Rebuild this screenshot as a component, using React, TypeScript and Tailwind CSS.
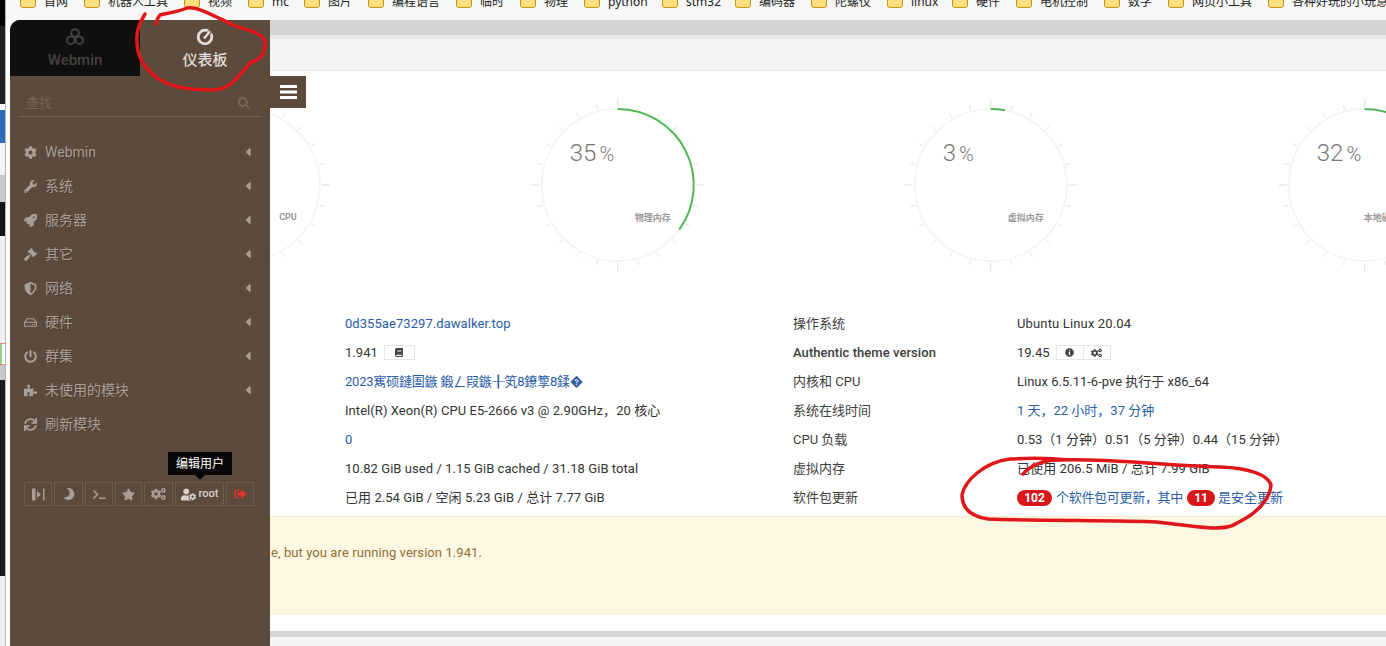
import React from "react";
import { FaCog, FaWrench, FaRocket, FaGavel, FaShieldAlt, FaRegHdd, FaPowerOff, FaPuzzlePiece, FaSync, FaCaretLeft, FaSearch, FaStar, FaCogs, FaMoon, FaTerminal, FaSignOutAlt, FaUserCog, FaBook, FaInfoCircle } from "react-icons/fa";

const bookmarks: [string, string][] = [
  ["首网", "w-[24px]"],
  ["机器人工具", "w-[60px]"],
  ["视频", "w-[24px]"],
  ["mc", "w-[16px]"],
  ["图片", "w-[24px]"],
  ["编程语言", "w-[48px]"],
  ["临时", "w-[24px]"],
  ["物理", "w-[24px]"],
  ["python", "w-[38px]"],
  ["stm32", "w-[33px]"],
  ["编码器", "w-[36px]"],
  ["陀螺仪", "w-[36px]"],
  ["linux", "w-[25px]"],
  ["硬件", "w-[24px]"],
  ["电机控制", "w-[48px]"],
  ["数学", "w-[24px]"],
  ["网页小工具", "w-[60px]"],
  ["各种好玩的小玩意", "w-[96px]"],
];

const menu: [React.ComponentType<{ className?: string }>, string, boolean][] = [
  [FaCog, "Webmin", true],
  [FaWrench, "系统", true],
  [FaRocket, "服务器", true],
  [FaGavel, "其它", true],
  [FaShieldAlt, "网络", true],
  [FaRegHdd, "硬件", true],
  [FaPowerOff, "群集", true],
  [FaPuzzlePiece, "未使用的模块", true],
  [FaSync, "刷新模块", false],
];

function Gauge({ pct, label }: { pct: number; label: string }) {
  const cx = 186.75, cy = 114, r = 76;
  const a = (pct / 100) * 2 * Math.PI;
  const ex = cx + r * Math.sin(a), ey = cy - r * Math.cos(a);
  const ticks = Array.from({ length: 24 }, (_, i) => i * 15);
  return (
    <svg width="373.5" height="238" className="shrink-0">
      <circle cx={cx} cy={cy} r={r} fill="none" stroke="#f5f5f5" strokeWidth="2" />
      {ticks.map((d) => {
        const t = (d * Math.PI) / 180;
        const major = d % 90 === 0;
        const r1 = 78, r2 = major ? 86 : 83;
        return (
          <line key={d} x1={cx + r1 * Math.sin(t)} y1={cy - r1 * Math.cos(t)} x2={cx + r2 * Math.sin(t)} y2={cy - r2 * Math.cos(t)} stroke={major ? "#dddddd" : "#e4e4e4"} strokeWidth="1" />
        );
      })}
      {pct > 0 && (
        <path d={`M${cx} ${cy - r}A${r} ${r} 0 ${pct > 50 ? 1 : 0} 1 ${ex} ${ey}`} fill="none" stroke="#52b856" strokeWidth="2" />
      )}
      {pct > 0 && (
        <text x={cx - 48} y={cy - 24} fill="#777777" fontSize="24" fontWeight="300">
          {pct}
          <tspan fontSize="20" dx="3">%</tspan>
        </text>
      )}
      <text x={cx + 53} y={pct > 0 ? cy + 36 : cy + 35} fill="#9a9a9a" fontSize="9" fontWeight="700" textAnchor="end">{label}</text>
    </svg>
  );
}

function Row({ a, b, c }: { a: React.ReactNode; b: React.ReactNode; c: React.ReactNode }) {
  return (
    <div className="grid h-[29px] grid-cols-[448px_224px_1fr] items-center">
      <div className="whitespace-nowrap tracking-[0.06px]">{a}</div>
      <div className="whitespace-nowrap text-[#3d3d3d]">{b}</div>
      <div className="whitespace-nowrap">{c}</div>
    </div>
  );
}

function SideButton({ w, children }: { w: string; children: React.ReactNode }) {
  return <div className={`flex h-[24px] items-center justify-center border border-[#6e5b4c] text-[#a79d95] ${w}`}>{children}</div>;
}

export default function App() {
  return (
    <div className="relative flex h-[646px] w-[1386px] overflow-hidden bg-[#f7f7f7] font-[Roboto,'Noto_Sans_CJK_SC',sans-serif] text-[13px] text-[#333333]">
      <div className="flex h-full w-[6px] shrink-0 flex-col border-r border-[#b5b5b5]">
        <div className="h-[26px] bg-black" />
        <div className="h-[78px] bg-[#202020]" />
        <div className="h-[6px] bg-white" />
        <div className="h-[33px] bg-[#2f6bbd]" />
        <div className="h-[32px] bg-[#f4f4f4]" />
        <div className="h-[27px] bg-[#c9c9c9]" />
        <div className="h-[34px] bg-[#151515]" />
        <div className="h-[97px] bg-[#efefef]" />
        <div className="h-[10px] bg-[#f0f0f0]" />
        <div className="flex h-[22px] border-y border-[#ee7f7f] bg-white">
          <div className="w-[2px] bg-[#8fd08f]" />
        </div>
        <div className="h-[15px] bg-[#c6c6c6]" />
        <div className="h-[196px] bg-[#1a1a1a]" />
        <div className="flex-1 bg-[#ececec]" />
      </div>

      <div className="flex min-w-0 flex-1 flex-col">
        <div className="flex h-[20px] shrink-0 gap-4 overflow-hidden bg-[#f7f7f7] pl-[14px] font-['Noto_Sans','Noto_Sans_CJK_SC',sans-serif] text-[12px] text-[#222222]">
          {bookmarks.map(([b, w]) => (
            <div key={b} className="-mt-[8px] flex h-[16px] shrink-0 items-center gap-2">
              <span className="h-[16px] w-[16px] rounded-[3px] border border-[#c9940f] bg-[#ffdf80]" />
              <span className={`whitespace-nowrap pt-[3px] leading-[14px] ${w}`}>{b}</span>
            </div>
          ))}
        </div>

        <div className="flex min-h-0 flex-1">
          <div className="w-[4px] shrink-0 bg-white" />

          <aside className="flex w-[260px] shrink-0 flex-col rounded-tl-[10px] bg-[#5c4a3c]">
            <div className="flex h-[56px] shrink-0">
              <div className="flex w-[130px] flex-col items-center rounded-tl-[10px] bg-[#100f0d] pt-[8px] text-[#454341]">
                <svg width="18" height="18" viewBox="0 0 18 18" fill="none" stroke="currentColor" strokeWidth="2">
                  <circle cx="9" cy="5" r="3.8" />
                  <circle cx="4.8" cy="12.2" r="3.8" />
                  <circle cx="13.2" cy="12.2" r="3.8" />
                </svg>
                <span className="mt-[4px] text-[15px] font-medium leading-[20px]">Webmin</span>
              </div>
              <div className="flex w-[130px] flex-col items-center pt-[8px] text-[#e2ddd8]">
                <svg width="18" height="18" viewBox="0 0 18 18" fill="none" stroke="currentColor">
                  <circle cx="9" cy="9" r="6.8" strokeWidth="2.8" />
                  <path d="M7.5 11.5L14.5 3" stroke="#5c4a3c" strokeWidth="4" />
                  <path d="M8 10.5L14 3.2" strokeWidth="2.4" />
                </svg>
                <span className="mt-[4px] text-[15px] font-medium leading-[20px]">仪表板</span>
              </div>
            </div>

            <div className="mx-[10px] flex h-[41px] shrink-0 items-center justify-between border-b border-[#75645a] pl-[6px] pr-[10px] pt-[13px] text-[#75655a]">
              <span className="text-[13px]">查找</span>
              <FaSearch className="h-[12px] w-[12px]" />
            </div>

            <nav className="mt-[18px] flex shrink-0 flex-col text-[14px] text-[#a89f97] [text-shadow:1px_1px_0_rgba(0,0,0,0.2)]">
              {menu.map(([Icon, label, caret]) => (
                <div key={label} className="flex h-[34px] items-center pl-[14px] pr-[19px]">
                  <Icon className="h-[13px] w-[13px] shrink-0" />
                  <span className="ml-[8px] flex-1 whitespace-nowrap">{label}</span>
                  {caret && <FaCaretLeft className="h-[14px] w-[6px]" />}
                </div>
              ))}
            </nav>

            <div className="ml-[14px] mt-[41px] flex gap-[2px]">
              <SideButton w="w-[28px]">
                <svg width="13" height="13" viewBox="0 0 13 13" fill="currentColor">
                  <rect x="0" y="0.5" width="3.5" height="12" />
                  <path d="M5 3L9 6.5L5 10Z" />
                  <rect x="11" y="0.5" width="1.5" height="12" />
                </svg>
              </SideButton>
              <SideButton w="w-[29px]"><FaMoon className="h-[12px] w-[12px] -scale-x-100" /></SideButton>
              <SideButton w="w-[28px]"><FaTerminal className="h-[11px] w-[13px]" /></SideButton>
              <SideButton w="w-[27px]"><FaStar className="h-[13px] w-[13px]" /></SideButton>
              <SideButton w="w-[29px]"><FaCogs className="h-[14px] w-[15px]" /></SideButton>
              <div className="relative">
                <div className="absolute -top-[30px] left-[-7px] flex h-[23px] w-[64px] items-center justify-center bg-[#0a0908] text-[12px] text-white">编辑用户</div>
                <div className="absolute -top-[7px] left-[20px] h-0 w-0 border-x-[5px] border-t-[5px] border-x-transparent border-t-[#0a0908]" />
                <div className="flex h-[24px] w-[49px] items-center justify-center gap-[3px] border border-[#6e5b4c] text-[11px] font-medium text-[#d8d2cc]">
                  <FaUserCog className="h-[13px] w-[15px]" />
                  <span>root</span>
                </div>
              </div>
              <SideButton w="w-[28px]"><FaSignOutAlt className="h-[12px] w-[13px] text-[#e2322f]" /></SideButton>
            </div>
          </aside>

          <main className="relative flex min-w-0 flex-1 flex-col overflow-hidden">
            <div className="h-[15px] shrink-0 bg-[#d4d4d4]" />
            <div className="h-[4px] shrink-0 bg-[#e8e8e8]" />
            <div className="h-[32px] shrink-0 border-b border-[#e7e7e7] bg-[#f5f5f5]" />

            <div className="flex flex-1 flex-col bg-white">
              <div className="-ml-[213px] flex">
                <Gauge pct={0} label="CPU" />
                <Gauge pct={35} label="物理内存" />
                <Gauge pct={3} label="虚拟内存" />
                <Gauge pct={32} label="本地磁盘使用" />
              </div>

              <div className="pl-[75px]">
                <Row
                  a={<span className="text-[#2a5ca8]">0d355ae73297.dawalker.top</span>}
                  b="操作系统"
                  c={<span className="tracking-[0.15px]">Ubuntu Linux 20.04</span>}
                />
                <Row
                  a={
                    <span className="flex items-center gap-[6px]">
                      1.941
                      <span className="flex h-[15px] w-[31px] items-center justify-center border border-[#e6e6e6] text-[#444444]"><FaBook className="h-[9px] w-[10px]" /></span>
                    </span>
                  }
                  b={<span className="font-medium tracking-[0.05px]">Authentic theme version</span>}
                  c={
                    <span className="flex items-center gap-[6px]">
                      19.45
                      <span className="flex h-[15px] border border-[#e6e6e6] text-[#444444]">
                        <span className="flex w-[27px] items-center justify-center border-r border-[#e6e6e6]"><FaInfoCircle className="h-[9px] w-[9px]" /></span>
                        <span className="flex w-[26px] items-center justify-center"><FaCogs className="h-[10px] w-[11px]" /></span>
                      </span>
                    </span>
                  }
                />
                <Row
                  a={<span className="tracking-[-0.2px] text-[#2a5ca8]">2023寯硕鏈圄鏃 鍛ㄥ叚鏃╂笂8鐐箰8鍒�</span>}
                  b="内核和 CPU"
                  c="Linux 6.5.11-6-pve 执行于 x86_64"
                />
                <Row
                  a="Intel(R) Xeon(R) CPU E5-2666 v3 @ 2.90GHz，20 核心"
                  b="系统在线时间"
                  c={<span className="text-[#2a5ca8]">1 天，22 小时，37 分钟</span>}
                />
                <Row
                  a={<span className="text-[#2a5ca8]">0</span>}
                  b={<span>CPU 负载</span>}
                  c="0.53（1 分钟）0.51（5 分钟）0.44（15 分钟）"
                />
                <Row
                  a="10.82 GiB used / 1.15 GiB cached / 31.18 GiB total"
                  b="虚拟内存"
                  c={<span className="tracking-[0.08px]">已使用 206.5 MiB / 总计 7.99 GiB</span>}
                />
                <Row
                  a="已用 2.54 GiB / 空闲 5.23 GiB / 总计 7.77 GiB"
                  b="软件包更新"
                  c={
                    <span className="flex items-center text-[#2a5ca8]">
                      <span className="mr-[4px] flex h-[16px] w-[35px] items-center justify-center rounded-full bg-[#d9171b] text-[12px] font-bold text-white">102</span>
                      <span className="tracking-[-0.3px]">个软件包可更新，其中</span>
                      <span className="ml-[4px] mr-[3px] flex h-[16px] w-[28px] items-center justify-center rounded-full bg-[#d9171b] text-[12px] font-bold text-white">11</span>
                      是安全更新
                    </span>
                  }
                />
              </div>

              <div className="mt-[4px] h-[98px] border-y border-[#f8ecc8] bg-[#fef7e2] pl-[1px] pt-[27px] leading-[18px] tracking-[0.08px] text-[#8f6f35]">
                e, but you are running version 1.941.
              </div>
            </div>

            <div className="h-[6px] shrink-0 bg-[#d4d4d4]" />
            <div className="h-[9px] shrink-0 bg-[#f5f5f5]" />

            <div className="absolute left-0 top-[56px] flex h-[32px] w-[36px] items-center justify-center bg-[#5c4a3c]">
              <svg width="17" height="14" viewBox="0 0 17 14" fill="#ffffff">
                <rect y="0" width="17" height="3" rx="0.5" />
                <rect y="5.5" width="17" height="3" rx="0.5" />
                <rect y="11" width="17" height="3" rx="0.5" />
              </svg>
            </div>
          </main>
        </div>
      </div>

      <svg className="pointer-events-none absolute left-0 top-0" width="1386" height="646" fill="none" stroke="#e0161a" strokeWidth="3.5" strokeLinecap="round" strokeLinejoin="round">
        <path d="M145 14C140 22 136 30 137 42C137 58 145 68 157 78C170 86 182 90 213 90C228 90 234 82 250 63C258 60 266 56 265 42C263 32 245 30 233 25C218 18 198 6 187 8C175 13 166 13 160 15C157 18 157 21 156 24" />
        <path d="M1023 474C1030 466 1040 460 1060 460C1110 458 1150 465 1220 467C1250 468 1268 475 1271 485C1270 500 1256 514 1237 523C1225 532 1200 527 1157 522C1120 520 1040 521 988 519C968 516 962 506 962 495C965 480 985 462 1010 459C1030 458 1050 458 1070 460" />
      </svg>
    </div>
  );
}
